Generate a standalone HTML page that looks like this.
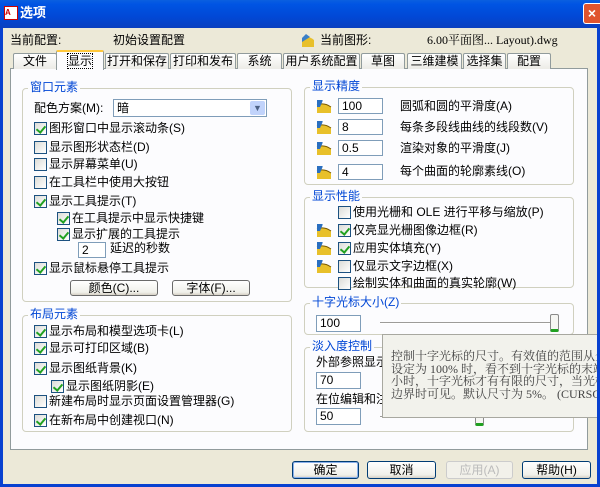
<!DOCTYPE html>
<html><head><meta charset="utf-8"><style>
*{margin:0;padding:0;box-sizing:border-box}
html,body{width:600px;height:487px;overflow:hidden}
body{background:#ece9d8;font-family:"Liberation Sans","Noto Sans CJK SC","WenQuanYi Zen Hei",sans-serif;font-size:12px;color:#000;position:relative}
.a{position:absolute;white-space:nowrap;line-height:14px}
.title{position:absolute;left:0;top:0;width:600px;height:28px;background:linear-gradient(#0a5fe0,#0054e3 15%,#0148d6 60%,#0a3fbf);}
.grp{position:absolute;border:1px solid #d0d0bf;border-radius:4px}
.gt{position:absolute;background:#fcfcfe;color:#0046d5;padding:0 2px;line-height:14px}
.cb{position:absolute;width:13px;height:13px;border:1px solid #1c5180;background:linear-gradient(135deg,#dcdcd7,#fff)}
.cb.on::after{content:"";position:absolute;left:3px;top:1px;width:4px;height:7px;border:solid #21a121;border-width:0 2px 2px 0;transform:rotate(40deg)}
.in{position:absolute;background:#fff;border:1px solid #7f9db9;padding-left:3px;line-height:14px}
.btn{position:absolute;border:1px solid #003c74;border-radius:3px;background:linear-gradient(#fff,#f0f0ea 80%,#d6d0c5);text-align:center;line-height:16px}
.tab{position:absolute;top:53px;height:16px;border:1px solid #919b9c;border-bottom:none;border-radius:2px 2px 0 0;background:linear-gradient(#fff,#ecebe6);text-align:center;line-height:14px}
.ic{position:absolute;width:16px;height:16px}
.sl{position:absolute;height:2px;border-top:1px solid #9d9c99;border-bottom:1px solid #fff}
.th{position:absolute;width:9px;height:18px;border:1px solid #8a8a8a;border-radius:2px;background:#f6f6f3;border-bottom:3px solid #21a121}
</style></head><body>
<div class="title"></div>
<div class="a" style="left:4px;top:6px;width:14px;height:14px;background:#fff;border:1px solid #c00;color:#c00;font-size:8px;line-height:12px;font-weight:bold">A</div>
<div class="a" style="left:20px;top:6px;color:#fff;font-weight:bold;font-size:13px">选项</div>
<div class="a" style="left:583px;top:3px;width:17px;height:21px;background:#e0542f;border:1px solid #fff;border-right:none;border-radius:3px 0 0 3px;color:#fff;font-weight:bold;font-size:14px;line-height:19px;text-align:center">×</div>
<div style="position:absolute;left:0;top:28px;width:3px;height:459px;background:#0841d0"></div>
<div style="position:absolute;left:597px;top:28px;width:3px;height:459px;background:#0841d0"></div>
<div style="position:absolute;left:0;top:484px;width:600px;height:3px;background:#0841d0"></div>

<div class="a" style="left:10px;top:33px">当前配置:</div>
<div class="a" style="left:113px;top:33px">初始设置配置</div>
<svg class="ic" style="left:300px;top:32px" viewBox="0 0 16 16"><path d="M2 15 L2 6 Q8 3 14 8 L14 15Z" fill="#e8c02a"/><path d="M2 6 L6 2 L10 5 L2 10Z" fill="#3a7fc8"/></svg>
<div class="a" style="left:320px;top:33px">当前图形:</div>
<div class="a" style="left:427px;top:33px;font-family:'Liberation Serif','Noto Serif CJK SC',serif">6.00平面图... Layout).dwg</div>

<div style="position:absolute;left:10px;top:68px;width:578px;height:382px;background:#fcfcfe;border:1px solid #919b9c"></div>
<div class="tab" style="left:13px;width:44px">文件</div>
<div class="tab" style="left:105px;width:64px">打开和保存</div>
<div class="tab" style="left:170px;width:66px">打印和发布</div>
<div class="tab" style="left:237px;width:45px">系统</div>
<div class="tab" style="left:283px;width:77px">用户系统配置</div>
<div class="tab" style="left:361px;width:44px">草图</div>
<div class="tab" style="left:407px;width:55px">三维建模</div>
<div class="tab" style="left:463px;width:43px">选择集</div>
<div class="tab" style="left:507px;width:44px">配置</div>
<div class="tab" style="left:56px;top:50px;width:48px;height:20px;background:#fcfcfe;border-top:2px solid #ffc83c;line-height:18px"><span style="outline:1px dotted #000">显示</span></div>

<div class="grp" style="left:22px;top:88px;width:270px;height:214px"></div>
<div class="gt" style="left:28px;top:80px">窗口元素</div>
<div class="a" style="left:34px;top:101px">配色方案(M):</div>
<div class="in" style="left:113px;top:99px;width:154px;height:18px;line-height:16px">暗</div>
<div style="position:absolute;left:250px;top:101px;width:15px;height:14px;background:#c1d3fb;border-radius:2px;color:#4d6185;font-size:9px;text-align:center;line-height:14px">▼</div>
<div class="cb on" style="left:34px;top:122px"></div><div class="a" style="left:49px;top:121px">图形窗口中显示滚动条(S)</div>
<div class="cb" style="left:34px;top:141px"></div><div class="a" style="left:49px;top:140px">显示图形状态栏(D)</div>
<div class="cb" style="left:34px;top:158px"></div><div class="a" style="left:49px;top:157px">显示屏幕菜单(U)</div>
<div class="cb" style="left:34px;top:176px"></div><div class="a" style="left:49px;top:175px">在工具栏中使用大按钮</div>
<div class="cb on" style="left:34px;top:195px"></div><div class="a" style="left:49px;top:194px">显示工具提示(T)</div>
<div class="cb on" style="left:57px;top:212px"></div><div class="a" style="left:72px;top:211px">在工具提示中显示快捷键</div>
<div class="cb on" style="left:57px;top:228px"></div><div class="a" style="left:72px;top:227px">显示扩展的工具提示</div>
<div class="in" style="left:78px;top:242px;width:28px;height:16px">2</div><div class="a" style="left:110px;top:241px">延迟的秒数</div>
<div class="cb on" style="left:34px;top:262px"></div><div class="a" style="left:49px;top:261px">显示鼠标悬停工具提示</div>
<div class="btn" style="left:70px;top:280px;width:88px;height:16px;line-height:14px;border-color:#6a6a6a">颜色(C)...</div>
<div class="btn" style="left:172px;top:280px;width:78px;height:16px;line-height:14px;border-color:#6a6a6a">字体(F)...</div>

<div class="grp" style="left:22px;top:315px;width:270px;height:117px"></div>
<div class="gt" style="left:28px;top:307px">布局元素</div>
<div class="cb on" style="left:34px;top:325px"></div><div class="a" style="left:49px;top:324px">显示布局和模型选项卡(L)</div>
<div class="cb on" style="left:34px;top:342px"></div><div class="a" style="left:49px;top:341px">显示可打印区域(B)</div>
<div class="cb on" style="left:34px;top:362px"></div><div class="a" style="left:49px;top:361px">显示图纸背景(K)</div>
<div class="cb on" style="left:51px;top:380px"></div><div class="a" style="left:66px;top:379px">显示图纸阴影(E)</div>
<div class="cb" style="left:34px;top:395px"></div><div class="a" style="left:49px;top:394px">新建布局时显示页面设置管理器(G)</div>
<div class="cb on" style="left:34px;top:414px"></div><div class="a" style="left:49px;top:413px">在新布局中创建视口(N)</div>

<div class="grp" style="left:304px;top:87px;width:270px;height:98px"></div>
<div class="gt" style="left:310px;top:79px">显示精度</div>
<svg width="0" height="0" style="position:absolute"><defs><g id="dr"><path d="M1 15 L1 7 Q8 4 15 9 L15 15Z" fill="#e8c02a"/><path d="M1 7 Q8 4 15 9" stroke="#7a5a00" fill="none"/><path d="M1 2 L7 2 L4 9 L1 9Z" fill="#2a6fc0"/><circle cx="8" cy="3" r="1.5" fill="#fff"/></g></defs></svg>
<svg class="ic" style="left:316px;top:98px"><use href="#dr"/></svg>
<svg class="ic" style="left:316px;top:119px"><use href="#dr"/></svg>
<svg class="ic" style="left:316px;top:140px"><use href="#dr"/></svg>
<svg class="ic" style="left:316px;top:164px"><use href="#dr"/></svg>
<div class="in" style="left:338px;top:98px;width:45px;height:16px">100</div><div class="a" style="left:400px;top:99px">圆弧和圆的平滑度(A)</div>
<div class="in" style="left:338px;top:119px;width:45px;height:16px">8</div><div class="a" style="left:400px;top:120px">每条多段线曲线的线段数(V)</div>
<div class="in" style="left:338px;top:140px;width:45px;height:16px">0.5</div><div class="a" style="left:400px;top:141px">渲染对象的平滑度(J)</div>
<div class="in" style="left:338px;top:164px;width:45px;height:16px">4</div><div class="a" style="left:400px;top:164px">每个曲面的轮廓素线(O)</div>

<div class="grp" style="left:304px;top:197px;width:270px;height:91px"></div>
<div class="gt" style="left:310px;top:189px">显示性能</div>
<svg class="ic" style="left:316px;top:222px"><use href="#dr"/></svg>
<svg class="ic" style="left:316px;top:240px"><use href="#dr"/></svg>
<svg class="ic" style="left:316px;top:258px"><use href="#dr"/></svg>
<div class="cb" style="left:338px;top:206px"></div><div class="a" style="left:353px;top:205px">使用光栅和 OLE 进行平移与缩放(P)</div>
<div class="cb on" style="left:338px;top:224px"></div><div class="a" style="left:353px;top:223px">仅亮显光栅图像边框(R)</div>
<div class="cb on" style="left:338px;top:242px"></div><div class="a" style="left:353px;top:241px">应用实体填充(Y)</div>
<div class="cb" style="left:338px;top:260px"></div><div class="a" style="left:353px;top:259px">仅显示文字边框(X)</div>
<div class="cb" style="left:338px;top:277px"></div><div class="a" style="left:353px;top:276px">绘制实体和曲面的真实轮廓(W)</div>

<div class="grp" style="left:304px;top:303px;width:270px;height:32px"></div>
<div class="gt" style="left:310px;top:295px">十字光标大小(Z)</div>
<div class="in" style="left:316px;top:315px;width:45px;height:17px">100</div>
<div class="sl" style="left:380px;top:322px;width:177px"></div>
<div class="th" style="left:550px;top:314px"></div>

<div class="grp" style="left:304px;top:347px;width:270px;height:85px"></div>
<div class="gt" style="left:310px;top:339px">淡入度控制</div>
<div class="a" style="left:316px;top:355px">外部参照显示</div>
<div class="in" style="left:316px;top:372px;width:45px;height:17px">70</div>
<div class="a" style="left:316px;top:392px">在位编辑和注</div>
<div class="in" style="left:316px;top:408px;width:45px;height:17px">50</div>
<div class="sl" style="left:380px;top:416px;width:177px"></div>
<div class="th" style="left:475px;top:408px"></div>

<div style="position:absolute;left:382px;top:334px;width:215px;height:84px;overflow:hidden;background:#f2f2ec;border:1px solid #a8a8a0;border-right:none;font-family:'Liberation Serif','Noto Serif CJK SC',serif;font-size:12px;line-height:12.5px;padding:15px 0 0 8px;white-space:nowrap;color:#444">控制十字光标的尺寸。有效值的范围从全屏<br>设定为 100% 时，看不到十字光标的末端。<br>小时，十字光标才有有限的尺寸，当光标的<br>边界时可见。默认尺寸为 5%。 (CURSORSIZE)</div>

<div class="btn" style="left:292px;top:461px;width:67px;height:18px;box-shadow:inset 0 0 0 1px #8ab0ea">确定</div>
<div class="btn" style="left:367px;top:461px;width:69px;height:18px">取消</div>
<div class="btn" style="left:446px;top:461px;width:67px;height:18px;border-color:#ccc;color:#bbb;background:#f2f1ea">应用(A)</div>
<div class="btn" style="left:522px;top:461px;width:69px;height:18px">帮助(H)</div>
</body></html>
